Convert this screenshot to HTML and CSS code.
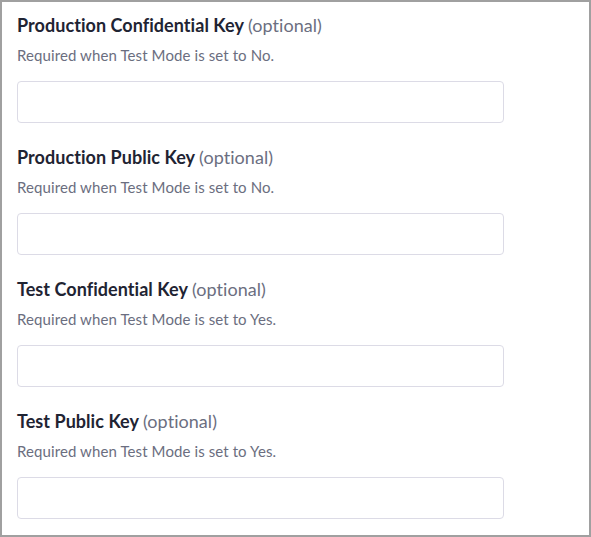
FILE: index.html
```html
<!DOCTYPE html>
<html>
<head>
<meta charset="utf-8">
<link rel="stylesheet" href="styles.css">
</head>
<body>
<div class="panel">
  <div class="field">
    <label class="label">Production Confidential Key <span class="opt">(optional)</span></label>
    <p class="desc">Required when Test Mode is set to No.</p>
    <input class="input" type="text">
  </div>
  <div class="field">
    <label class="label">Production Public Key <span class="opt">(optional)</span></label>
    <p class="desc">Required when Test Mode is set to No.</p>
    <input class="input" type="text">
  </div>
  <div class="field">
    <label class="label">Test Confidential Key <span class="opt">(optional)</span></label>
    <p class="desc">Required when Test Mode is set to Yes.</p>
    <input class="input" type="text">
  </div>
  <div class="field">
    <label class="label">Test Public Key <span class="opt">(optional)</span></label>
    <p class="desc">Required when Test Mode is set to Yes.</p>
    <input class="input" type="text">
  </div>
</div>
</body>
</html>
```
FILE: styles.css
```css
html, body {
  margin: 0;
  padding: 0;
  background: #fff;
}
.panel {
  box-sizing: border-box;
  width: 591px;
  height: 537px;
  border: 2px solid #a0a0a0;
  padding: 11px 15px 0;
  font-family: Lato, "Open Sans", sans-serif;
  overflow: hidden;
}
.field {
  display: flex;
  flex-direction: column;
  margin-bottom: 22px;
}
.label {
  font-size: 18px;
  line-height: 24px;
  font-weight: 700;
  letter-spacing: 0.05px;
  color: #1f2433;
}
.opt {
  font-weight: 400;
  color: #6b6e80;
}
.desc {
  margin: 8px 0 16px;
  font-size: 15px;
  line-height: 20px;
  letter-spacing: 0.1px;
  color: #6b6e80;
}
.input {
  box-sizing: border-box;
  width: 487px;
  height: 42px;
  border: 1px solid #dcdbe6;
  border-radius: 4px;
  margin: 0;
  padding: 0 10px;
  background: #fff;
}
```
